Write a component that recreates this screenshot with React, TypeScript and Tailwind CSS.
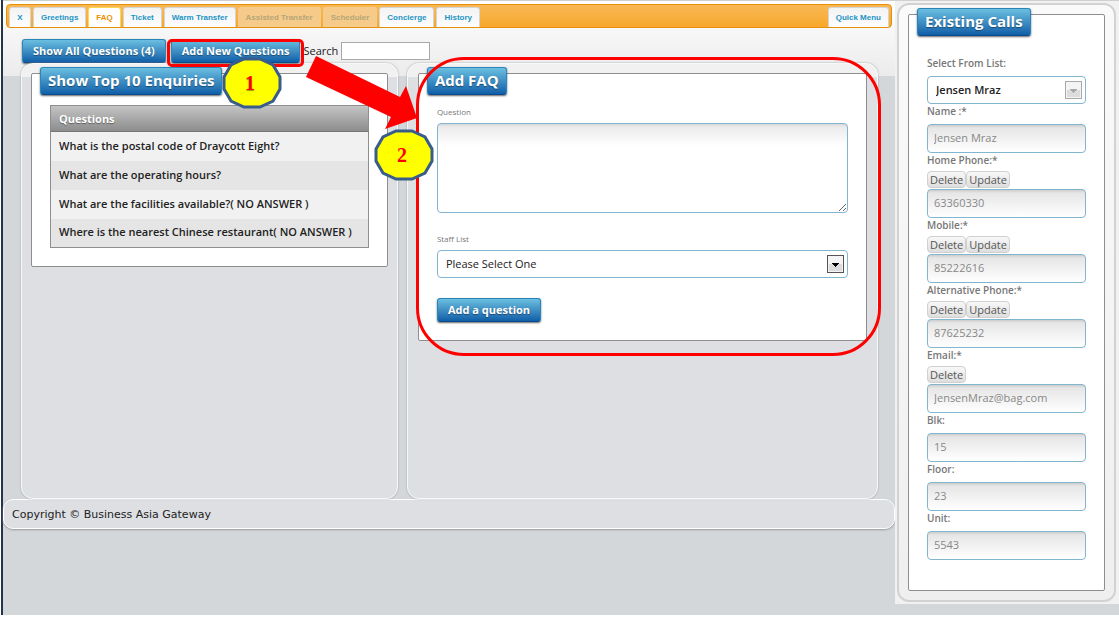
import type { ReactNode } from 'react';

const tabs = [
  { label: 'X', state: 'normal' },
  { label: 'Greetings', state: 'normal' },
  { label: 'FAQ', state: 'active' },
  { label: 'Ticket', state: 'normal' },
  { label: 'Warm Transfer', state: 'normal' },
  { label: 'Assisted Transfer', state: 'disabled' },
  { label: 'Scheduler', state: 'disabled' },
  { label: 'Concierge', state: 'normal' },
  { label: 'History', state: 'normal' },
];

const tabStyles: Record<string, string> = {
  normal: 'border-[#d5d5d5] bg-linear-to-b from-[#f3f3f3] to-[#fdfdfd] text-[#1c94c4]',
  active: 'border-[#fbd850] bg-white text-[#eb8f00]',
  disabled: 'border-[#f3cd90] bg-[#f6cb8a] text-[#b5a676]',
};

const questions = [
  'What is the postal code of Draycott Eight?',
  'What are the operating hours?',
  'What are the facilities available?( NO ANSWER )',
  'Where is the nearest Chinese restaurant( NO ANSWER )',
];

const fields = [
  { id: 'name', label: 'Name :*', value: 'Jensen Mraz', actions: [] },
  { id: 'home', label: 'Home Phone:*', value: '63360330', actions: ['Delete', 'Update'] },
  { id: 'mobile', label: 'Mobile:*', value: '85222616', actions: ['Delete', 'Update'] },
  { id: 'alternative', label: 'Alternative Phone:*', value: '87625232', actions: ['Delete', 'Update'] },
  { id: 'email', label: 'Email:*', value: 'JensenMraz@bag.com', actions: ['Delete'] },
  { id: 'blk', label: 'Blk:', value: '15', actions: [] },
  { id: 'floor', label: 'Floor:', value: '23', actions: [] },
  { id: 'unit', label: 'Unit:', value: '5543', actions: [] },
];

const blue =
  'rounded-[3px] border border-[#2a86b8] border-b-[#0a4a8c] bg-linear-to-b from-[#6bbfe0] to-[#0f5fa8] font-bold text-white shadow-[0_1px_2px_rgba(0,0,0,0.6)] text-shadow-[0_1px_1px_rgba(0,0,0,0.4)] whitespace-nowrap';

function Tab({ label, state }: { label: string; state: string }) {
  return (
    <button
      type="button"
      disabled={state === 'disabled'}
      className={`h-5 min-w-[22px] rounded-t-[3px] border border-b-0 px-[7px] text-[8px] font-bold whitespace-nowrap ${tabStyles[state]}`}
    >
      {label}
    </button>
  );
}

function BlueButton({ children }: { children: ReactNode }) {
  return (
    <button type="button" className={`h-6 px-[10px] pb-[2px] text-[11px] ${blue}`}>
      {children}
    </button>
  );
}

function Panel({ title, badge, children }: { title: string; badge?: ReactNode; children: ReactNode }) {
  return (
    <section className="rounded-[2px] border border-[#8e8e8e] bg-white">
      <div className="-mt-[7px] ml-2 flex">
        <h2 className={`relative flex h-7 items-center px-[7px] pb-[2px] text-[15px] ${blue}`}>
          {title}
          {badge}
        </h2>
      </div>
      {children}
    </section>
  );
}

function Badge({ n }: { n: string }) {
  return (
    <svg width="60" height="52" viewBox="-30 -26 60 52" aria-hidden="true">
      <polygon
        points="-28,-6 -21,-18 -8,-24 8,-24 21,-18 28,-6 28,6 21,18 8,24 -8,24 -21,18 -28,6"
        fill="#ffff00"
        stroke="#385d8a"
        strokeWidth="3"
      />
      <text x="-2" y="7" textAnchor="middle" fill="#ff0000" fontSize="20" fontWeight="700" fontFamily="Liberation Serif, serif">
        {n}
      </text>
    </svg>
  );
}

function Dropdown({ id, option, muted }: { id: string; option: string; muted?: boolean }) {
  return (
    <div className="relative">
      <select
        id={id}
        className="block h-7 w-full appearance-none rounded-[4px] border border-[#82b5d0] bg-white px-2 pb-[2px] text-[11px] text-[#222]"
      >
        <option>{option}</option>
      </select>
      <svg
        className={`pointer-events-none absolute top-[5px] right-1 ${muted ? 'text-[#a8a8a8]' : 'text-[#555]'}`}
        width="17"
        height="18"
        viewBox="0 0 17 18"
        aria-hidden="true"
      >
        <rect x="0.5" y="0.5" width="16" height="17" fill="#f4f4f4" stroke="currentColor" />
        <rect x="2" y="9" width="13" height="7" fill="#dcdcdc" />
        <path d="M5 8h7v1h-1v1h-1v1h-1v1h-1v-1h-1v-1h-1v-1h-1z" fill={muted ? '#a8a8a8' : '#000'} />
      </svg>
    </div>
  );
}

export default function App() {
  return (
    <div className="bg-white pl-px font-['Open_Sans',sans-serif] text-[11px] leading-[15px] text-[#222]">
      <div className="flex items-start border-l-2 border-[#26344a] bg-[#d3d7da] pb-[11px]">
        <div className="min-w-0 flex-1 bg-[linear-gradient(#d0d0d0_0_1px,#ffffff_1px,#ebebeb_76px,transparent_76px)]">
          <nav className="mx-[3px] mt-1 flex h-6 items-end gap-[2px] rounded-[4px] border border-[#e78f08] bg-linear-to-b from-[#f9b854] to-[#f6a828] px-[2px] font-['Liberation_Sans',sans-serif]">
            {tabs.map((t) => (
              <Tab key={t.label} {...t} />
            ))}
            <div className="ml-auto flex">
              <Tab label="Quick Menu" state="normal" />
            </div>
          </nav>

          <div className="ml-[19px] flex items-center pt-[11px]">
            <BlueButton>Show All Questions (4)</BlueButton>
            <div className="relative ml-[5px] flex">
              <BlueButton>Add New Questions</BlueButton>
              <span className="pointer-events-none absolute -inset-x-1 top-0 -bottom-1 z-10 rounded-[5px] border-3 border-[#ff0000]" />
            </div>
            <label htmlFor="search" className="ml-[3px] pb-[2px] text-[11px]">
              Search
            </label>
            <input id="search" type="text" className="ml-[3px] h-[18px] w-[89px] border border-[#a9a9a9] bg-white px-1" />
          </div>

          <div className="mr-[17px] ml-[18px] grid min-h-[436px] grid-cols-[4fr_5fr] gap-[9px]">
            <div className="min-w-0 rounded-[12px] border border-[#f8f8f8] bg-[linear-gradient(#f1f1f1_0_13px,#dddfe3_13px)] px-[9px] pt-[9px] shadow-[0_0_2px_#999]">
              <Panel
                title="Show Top 10 Enquiries"
                badge={
                  <span className="absolute -top-[11px] left-[181px] z-20">
                    <Badge n="1" />
                  </span>
                }
              >
                <div className="px-[18px] pt-[10px] pb-[18px]">
                  <table className="w-full border-collapse border border-[#8e8e8e] text-left">
                    <thead>
                      <tr className="h-[26px] border-b border-[#777] bg-linear-to-b from-[#c4c4c4] to-[#8d8d8d] text-white">
                        <th className="px-2 font-bold text-shadow-[0_1px_1px_rgba(0,0,0,0.4)]">Questions</th>
                      </tr>
                    </thead>
                    <tbody>
                      {questions.map((q) => (
                        <tr key={q} className="h-[29px] odd:bg-[#f1f1f1] even:bg-[#e5e5e5]">
                          <td className="px-2 pb-[2px] font-semibold">{q}</td>
                        </tr>
                      ))}
                    </tbody>
                  </table>
                </div>
              </Panel>
            </div>

            <div className="relative min-w-0 rounded-[12px] border border-[#f8f8f8] bg-[linear-gradient(#f1f1f1_0_13px,#dddfe3_13px)] px-[10px] pt-[9px] shadow-[0_0_2px_#999]">
              <Panel title="Add FAQ">
                <form className="flex flex-col px-[18px] pt-[9px] pb-[18px]">
                  <label htmlFor="question" className="text-[8px] text-[#777]">
                    Question
                  </label>
                  <textarea
                    id="question"
                    className="mt-1 h-[90px] resize-y rounded-[4px] border border-[#82b5d0] bg-[linear-gradient(#d8d8d8,#ebebeb_3px,#ffffff_22px)] p-2"
                  />
                  <label htmlFor="staff" className="mt-[18px] mb-1 text-[8px] text-[#777]">
                    Staff List
                  </label>
                  <Dropdown id="staff" option="Please Select One" />
                  <div className="mt-5 flex">
                    <BlueButton>Add a question</BlueButton>
                  </div>
                </form>
              </Panel>
              <span className="pointer-events-none absolute -top-[7px] -right-1 left-2 h-[299px] rounded-[48px] border-3 border-[#ff0000]" />
              <svg
                className="pointer-events-none absolute -top-[10px] -left-[104px]"
                width="114"
                height="76"
                viewBox="0 0 114 76"
                aria-hidden="true"
              >
                <polygon points="2,23 12,2 96,43 102,32 113,64 81,75 87,63" fill="#ff0000" />
              </svg>
              <span className="pointer-events-none absolute top-[65px] -left-[34px]">
                <Badge n="2" />
              </span>
            </div>
          </div>

          <footer className="flex h-[30px] items-center rounded-[10px] border border-white bg-[#dddfe3] px-2 font-['DejaVu_Sans',sans-serif] text-[11px] shadow-[0_1px_2px_#999]">
            Copyright © Business Asia Gateway
          </footer>
        </div>

        <aside className="w-56 shrink-0 border-t border-[#d0d0d0] bg-[#f1f1f1] px-[2px] pt-[2px] pb-[2px]">
          <div className="mr-px rounded-[12px] border-2 border-[#d2d2d2] bg-linear-to-b from-[#fafafa] to-[#efefef] px-[9px] pt-[9px] pb-[9px]">
            <Panel title="Existing Calls">
              <form className="flex flex-col px-[18px] pt-5 pb-[30px] text-[10px] font-semibold text-[#777]">
                <label htmlFor="caller" className="mb-[5px]">
                  Select From List:
                </label>
                <Dropdown id="caller" option="Jensen Mraz" muted />
                {fields.map((f) => (
                  <div key={f.id} className="flex flex-col">
                    <label htmlFor={f.id}>{f.label}</label>
                    {f.actions.length > 0 ? (
                      <div className="mt-[3px] mb-px flex">
                        {f.actions.map((a) => (
                          <button
                            key={a}
                            type="button"
                            className="h-[17px] rounded-[4px] border border-[#d0d0d0] bg-linear-to-b from-[#f8f8f8] to-[#dedede] px-[2px] text-[11px] leading-[15px] font-medium text-[#555]"
                          >
                            {a}
                          </button>
                        ))}
                      </div>
                    ) : (
                      <div className="h-[5px]" />
                    )}
                    <input
                      id={f.id}
                      type="text"
                      disabled
                      defaultValue={f.value}
                      className="h-[29px] w-full rounded-[4px] border border-[#82b5d0] bg-[linear-gradient(#cccccc,#e6e6e6_3px,#ffffff_27px)] px-[6px] pb-[2px] text-[11px] font-normal text-[#888]"
                    />
                  </div>
                ))}
              </form>
            </Panel>
          </div>
        </aside>
      </div>
    </div>
  );
}
